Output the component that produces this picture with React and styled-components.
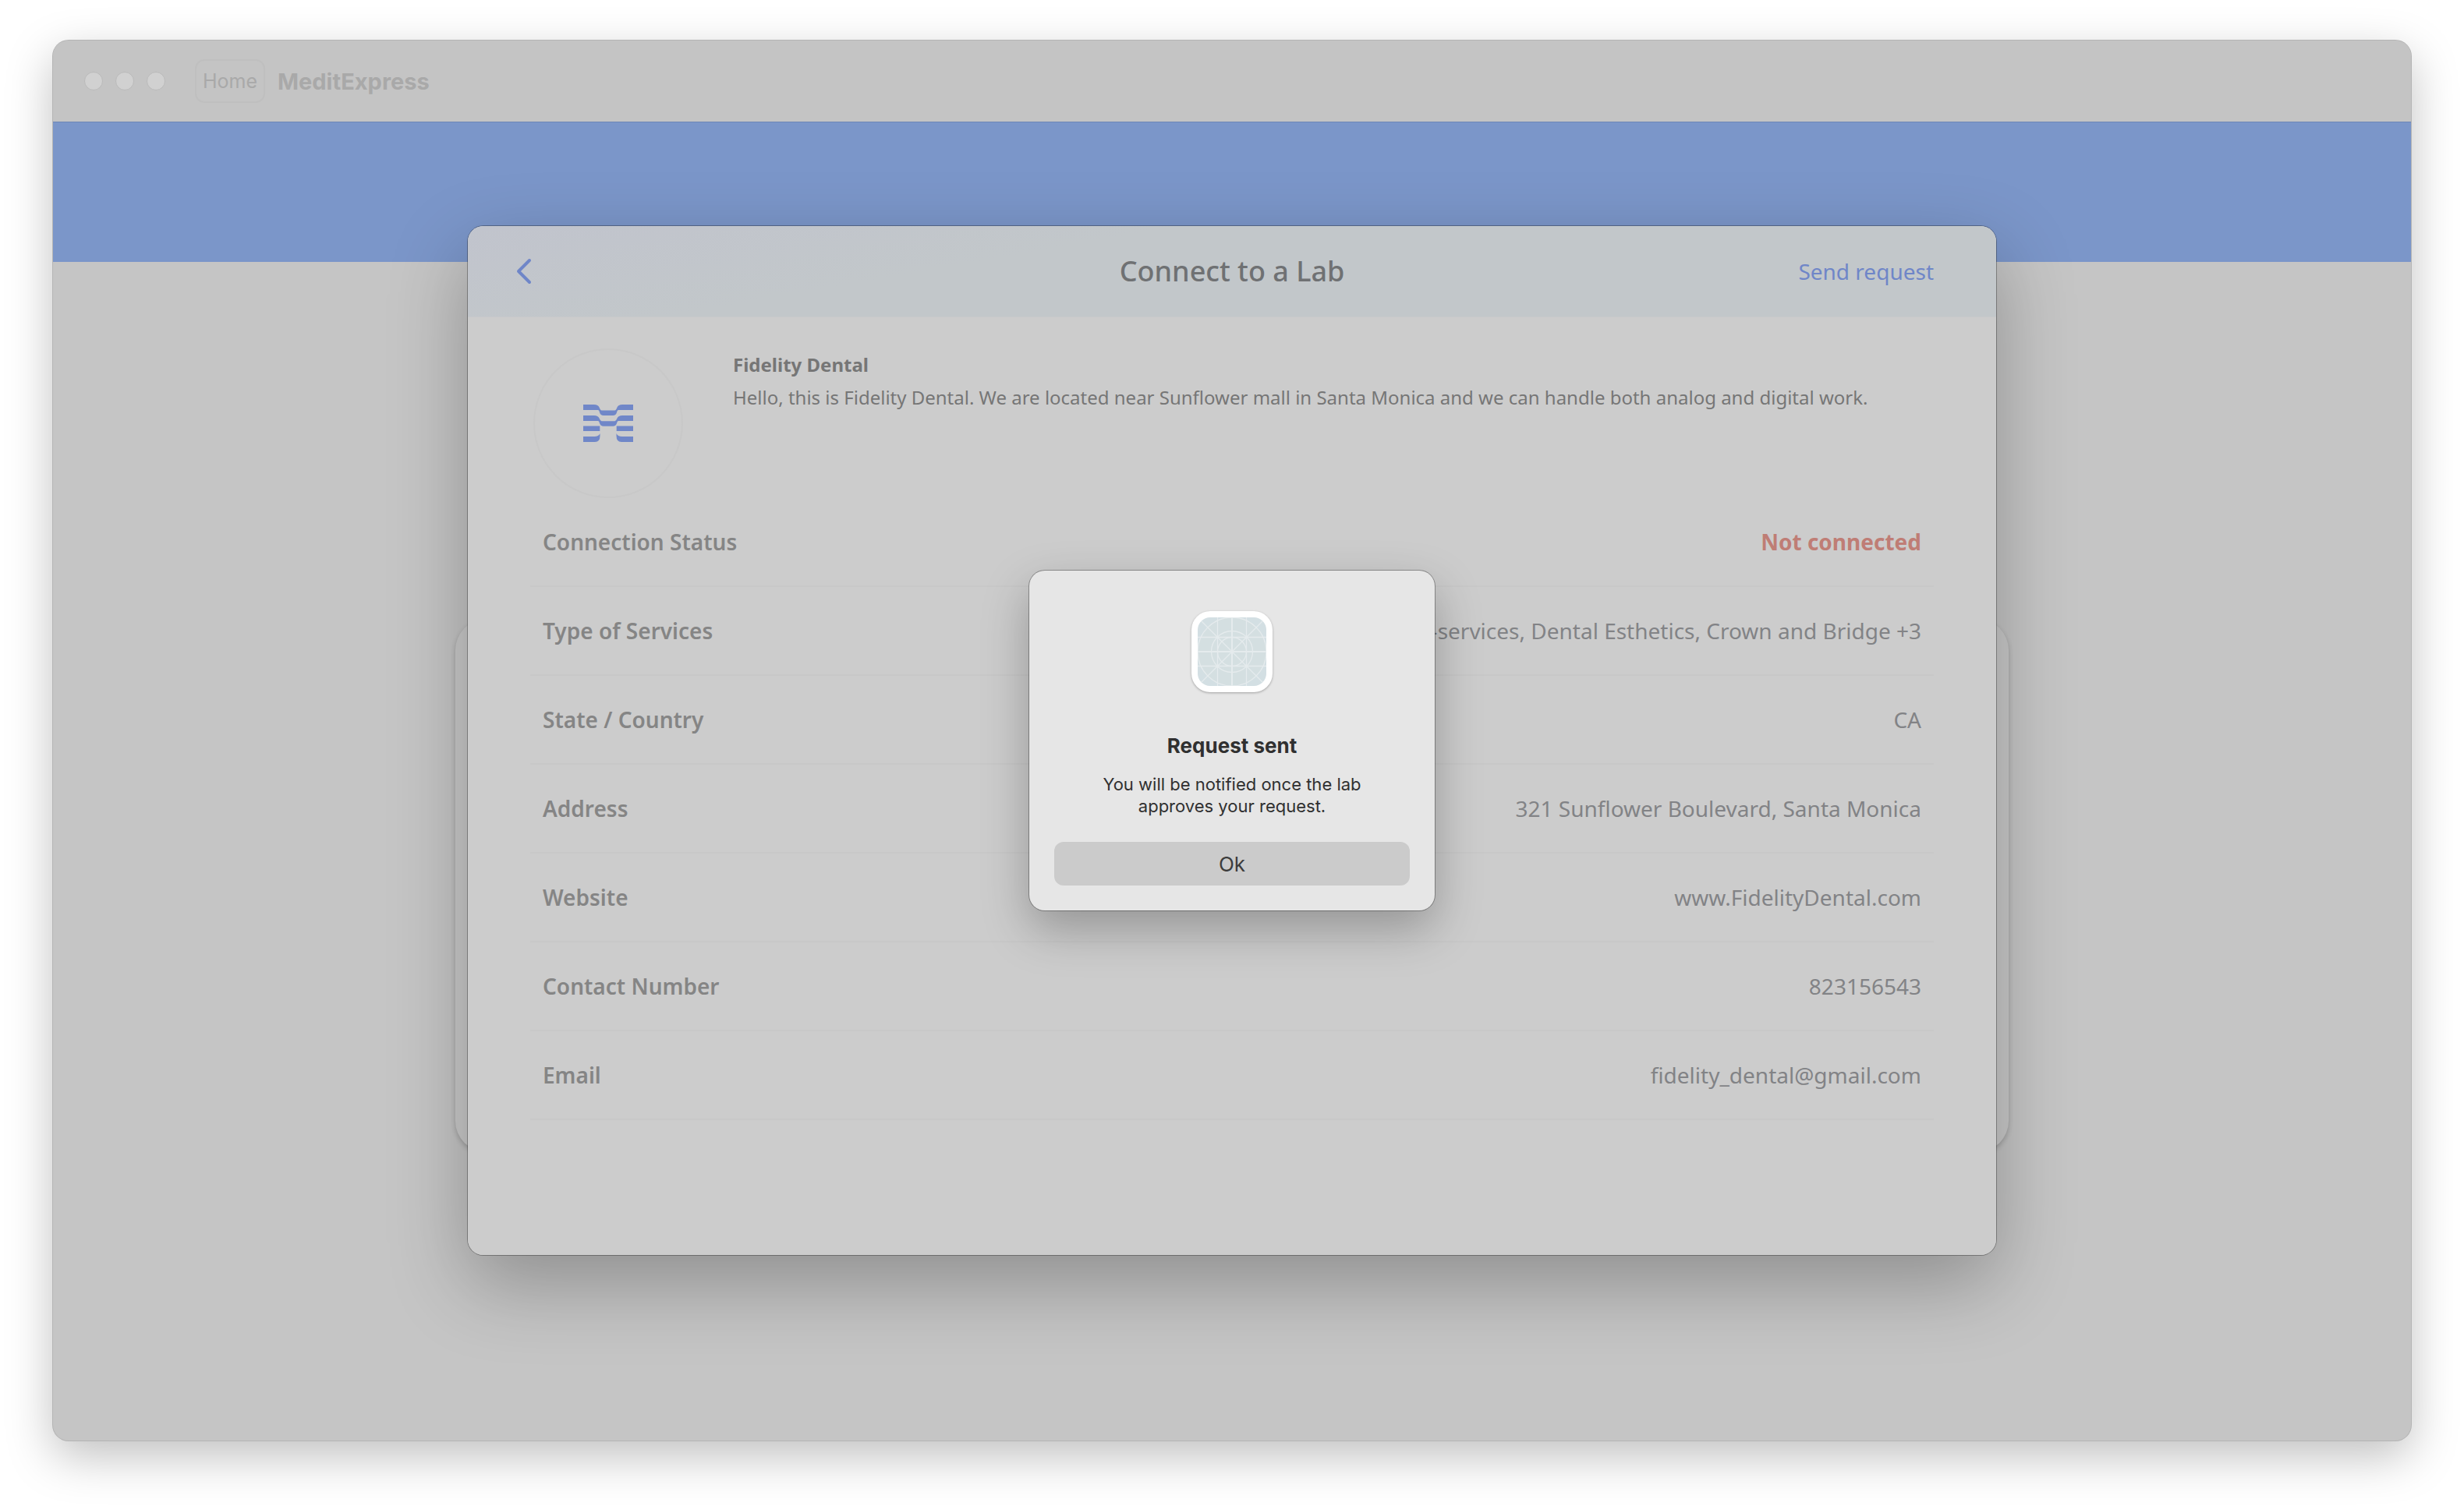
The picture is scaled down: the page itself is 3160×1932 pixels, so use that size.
import React from "react";
import styled, { createGlobalStyle } from "styled-components";

const GlobalStyle = createGlobalStyle`
  *, *::before, *::after { box-sizing: border-box; }
  body { margin: 0; background: #fff; font-family: "Noto Sans", sans-serif; }
  h1, h2, p, dl, dt, dd { margin: 0; }
  button { margin: 0; padding: 0; border: 0; background: none; font: inherit; color: inherit; cursor: pointer; }
`;

const Desktop = styled.div`
  min-height: 100vh;
  padding: 52px 68px 84px;
  display: grid;
`;

const AppWindow = styled.div`
  display: grid;
  grid-template-rows: 104px 180px 1fr;
  border-radius: 20px;
  background: #c5c5c5;
  box-shadow: 0 0 0 1px #b4b4b4, 0 20px 60px rgba(0, 0, 0, 0.25);
  position: relative;
`;

const TitleBar = styled.header`
  display: flex;
  align-items: center;
  padding: 0 40px;
  border-radius: 20px 20px 0 0;
  background: #c4c4c4;
  font-family: Inter, sans-serif;
  color: #a9a9a9;
`;

const Lights = styled.div`
  display: flex;
  gap: 16px;
  margin-right: 38px;
`;

const Light = styled.span`
  width: 24px;
  height: 24px;
  border-radius: 50%;
  background: #d1d1d1;
  border: 1px solid #bababa;
`;

const HomeButton = styled.button`
  height: 56px;
  padding: 0 8px;
  margin-right: 16px;
  border: 2px solid #bfbfbf;
  border-radius: 12px;
  font-size: 25px;
`;

const AppName = styled.h1`
  font-size: 29px;
  font-weight: 700;
`;

const Banner = styled.div`
  background: #7b96c9;
  border-top: 1px solid #6d86b6;
`;

const Workspace = styled.main`
  display: flex;
  justify-content: center;
  align-items: flex-start;
  padding-top: 458px;
`;

const BackCard = styled.div`
  width: 1992px;
  height: 684px;
  border-radius: 40px;
  background: #cacaca;
  box-shadow: 0 3px 6px rgba(0, 0, 0, 0.2);
`;

const Overlay = styled.div`
  position: absolute;
  inset: 0;
  display: grid;
  place-items: center;
`;

const Sheet = styled.section`
  width: 1960px;
  min-height: 1320px;
  border-radius: 20px;
  overflow: hidden;
  background: #cccccc;
  color: #767676;
`;

const SheetFrame = styled.div`
  border-radius: 20px;
  box-shadow: 0 0 0 1px rgba(0, 0, 0, 0.3), 0 36px 100px rgba(0, 0, 0, 0.28);
`;

const SheetHeader = styled.header`
  display: grid;
  grid-template-columns: 1fr auto 1fr;
  align-items: center;
  height: 117px;
  padding: 0 48px;
  background: linear-gradient(170deg, #c1c4cd 0%, #c2c7ca 35%, #c2c7ca 100%);
  border-bottom: 1px solid #c6c9cb;
`;

const BackButton = styled.button`
  justify-self: start;
  width: 48px;
  height: 48px;
  display: grid;
  place-items: center;
  color: #6f86c8;
`;

const SheetTitle = styled.h2`
  font-size: 36px;
  line-height: 48px;
  font-weight: 500;
  color: #6f7173;
`;

const SendButton = styled.button`
  justify-self: end;
  margin-right: 32px;
  font-size: 28px;
  line-height: 40px;
  color: #6f86c8;
`;

const SheetBody = styled.div`
  padding: 40px 80px;
`;

const Profile = styled.div`
  display: flex;
  gap: 64px;
  padding-left: 4px;
`;

const Avatar = styled.div`
  flex: none;
  width: 192px;
  height: 192px;
  display: grid;
  place-items: center;
  border: 2px solid #c8c8c8;
  border-radius: 50%;
  color: #7087c8;
`;

const About = styled.div`
  font-size: 24px;
  line-height: 42px;
`;

const LabName = styled.p`
  font-weight: 700;
`;

const Details = styled.dl``;

const Detail = styled.div`
  display: flex;
  justify-content: space-between;
  align-items: center;
  height: 114px;
  padding: 0 16px;
  border-bottom: 2px solid #c8c8c8;
  font-size: 28px;
  line-height: 40px;
`;

const Term = styled.dt`
  font-weight: 600;
  color: #858585;
`;

const Value = styled.dd`
  color: ${(p) => (p.$alert ? "#bf7d75" : "#828386")};
  font-weight: ${(p) => (p.$alert ? 700 : 400)};
`;

const Alert = styled.div`
  position: absolute;
  width: 520px;
  min-height: 436px;
  padding: 52px 32px 32px;
  display: flex;
  flex-direction: column;
  align-items: center;
  border-radius: 20px;
  background: #e6e6e6;
  box-shadow: 0 0 0 1px rgba(0, 0, 0, 0.3), 0 24px 60px rgba(0, 0, 0, 0.27);
  font-family: Inter, sans-serif;
  color: #303030;
  text-align: center;
`;

const AppIcon = styled.div`
  width: 104px;
  height: 104px;
  padding: 8px;
  border-radius: 24px;
  background: #fff;
  box-shadow: 0 1px 3px rgba(0, 0, 0, 0.3);
  svg { display: block; border-radius: 16px; }
`;

const AlertTitle = styled.h2`
  margin-top: 52px;
  font-size: 26px;
  line-height: 34px;
  font-weight: 700;
`;

const AlertText = styled.p`
  width: 360px;
  margin-top: 18px;
  font-size: 22px;
  line-height: 28px;
`;

const OkButton = styled.button`
  width: 100%;
  height: 56px;
  margin-top: auto;
  border-radius: 12px;
  background: #cbcbcb;
  font-size: 26px;
  color: #3c3c3c;
`;

const details = [
  ["Connection Status", "Not connected", true],
  ["Type of Services", "Full-services, Dental Esthetics, Crown and Bridge +3"],
  ["State / Country", "CA"],
  ["Address", "321 Sunflower Boulevard, Santa Monica"],
  ["Website", "www.FidelityDental.com"],
  ["Contact Number", "823156543"],
  ["Email", "fidelity_dental@gmail.com"],
];

function LabLogo() {
  return (
    <svg width="64" height="48" viewBox="0 0 64 48" fill="currentColor" aria-hidden="true">
      <path d="M0 0H14Q19 0 20.500 3.500Q22 7.500 23.500 7.500H40.500Q42 7.500 43.500 3.500Q45 0 50 0H64V7H45Q43.500 7 43 10Q42 14 38 14H26Q22 14 21 10Q20.500 7 19 7H0Z" />
      <path d="M0 14H14Q19 14 20.500 17.500Q22 21.200 23.500 21.200H40.500Q42 21.200 43.500 17.500Q45 14 50 14H64V21H45Q43.500 21 43 24Q42 27.700 38 27.700H26Q22 27.700 21 24Q20.500 21 19 21H0Z" />
      <path d="M0 27.500H21.300V34H0ZM42.700 27.500H64V34H42.700Z" />
      <path d="M0 41H14Q20 41 21.500 37V40Q21.500 48 15 48H0ZM64 41H50Q44 41 42.500 37V40Q42.500 48 49 48H64Z" />
    </svg>
  );
}

function IconGrid() {
  return (
    <svg width="88" height="88" viewBox="0 0 88 88" aria-hidden="true">
      <rect width="88" height="88" fill="#d3dfe3" />
      <circle cx="44" cy="44" r="44" fill="#d4dfe1" />
      <g fill="none" stroke="#e5ebed" strokeWidth="1.3">
        <path d="M25.500 0V88M62.500 0V88M0 25.500H88M0 62.500H88M0 0L88 88M88 0L0 88" />
        <path d="M44 0V88M0 44H88" strokeWidth="2" />
        <circle cx="44" cy="44" r="44" />
        <circle cx="44" cy="44" r="26.500" />
        <circle cx="44" cy="44" r="18.500" />
      </g>
    </svg>
  );
}

export default function App() {
  return (
    <>
      <GlobalStyle />
      <Desktop>
        <AppWindow>
          <TitleBar>
            <Lights>
              <Light />
              <Light />
              <Light />
            </Lights>
            <HomeButton type="button">Home</HomeButton>
            <AppName>MeditExpress</AppName>
          </TitleBar>
          <Banner />
          <Workspace>
            <BackCard />
          </Workspace>
          <Overlay>
            <SheetFrame>
              <Sheet>
                <SheetHeader>
                  <BackButton type="button" aria-label="Back">
                    <svg width="20" height="34" viewBox="0 0 20 34" fill="none" stroke="currentColor" strokeWidth="4" strokeLinecap="round" strokeLinejoin="round">
                      <path d="M17 3L3 17L17 31" />
                    </svg>
                  </BackButton>
                  <SheetTitle>Connect to a Lab</SheetTitle>
                  <SendButton type="button">Send request</SendButton>
                </SheetHeader>
                <SheetBody>
                  <Profile>
                    <Avatar>
                      <LabLogo />
                    </Avatar>
                    <About>
                      <LabName>Fidelity Dental</LabName>
                      <p>
                        Hello, this is Fidelity Dental. We are located near Sunflower mall in Santa Monica and we can
                        handle both analog and digital work.
                      </p>
                    </About>
                  </Profile>
                  <Details>
                    {details.map(([term, value, alert]) => (
                      <Detail key={term}>
                        <Term>{term}</Term>
                        <Value $alert={alert}>{value}</Value>
                      </Detail>
                    ))}
                  </Details>
                </SheetBody>
              </Sheet>
            </SheetFrame>
            <Alert role="alertdialog" aria-labelledby="alert-title" aria-describedby="alert-text">
              <AppIcon>
                <IconGrid />
              </AppIcon>
              <AlertTitle id="alert-title">Request sent</AlertTitle>
              <AlertText id="alert-text">You will be notified once the lab approves your request.</AlertText>
              <OkButton type="button">Ok</OkButton>
            </Alert>
          </Overlay>
        </AppWindow>
      </Desktop>
    </>
  );
}
